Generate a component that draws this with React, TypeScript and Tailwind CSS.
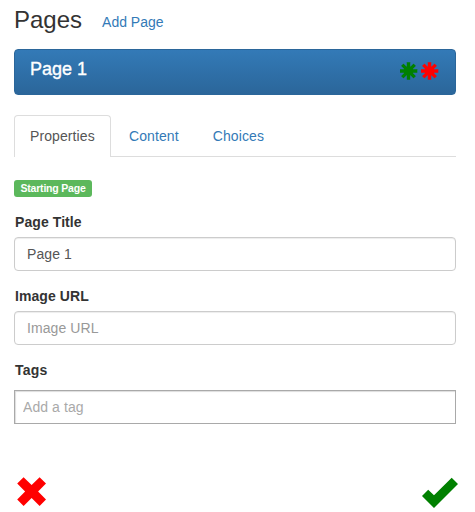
import React from 'react';

function Asterisk({ color }: { color: string }) {
  return (
    <svg width="18" height="18" viewBox="-8.5 -9 18 18" fill={color}>
      {[0, 45, 90, 135].map((angle) => (
        <rect key={angle} x="-1.7" y="-8.8" width="3.4" height="17.6" rx="0.2" transform={`rotate(${angle})`} />
      ))}
      <circle r="4.7" />
    </svg>
  );
}

function Field({ id, label, value, placeholder }: { id: string; label: string; value?: string; placeholder?: string }) {
  return (
    <div className="mb-[15px]">
      <label htmlFor={id} className="mb-[5px] block pl-px font-bold tracking-[0.08px]">{label}</label>
      <input
        id={id}
        defaultValue={value}
        placeholder={placeholder}
        className="block h-[34px] w-full rounded border border-[#ccc] bg-white px-3 py-1.5 tracking-[0.08px] text-[#555] shadow-[inset_0_1px_1px_rgba(0,0,0,0.075)] outline-none placeholder:text-[#999]"
      />
    </div>
  );
}

export default function App() {
  return (
    <main className="h-[512px] w-[475px] overflow-hidden bg-white pl-[14px] pr-[19px] pt-[6px] font-['Liberation_Sans',Arial,sans-serif] text-[14px] leading-5 text-[#333]">
      <header className="flex h-[43px] items-start">
        <h1 className="text-[24px] leading-[28px]">Pages</h1>
        <a className="ml-5 pt-[6px] text-[#337ab7]">Add Page</a>
      </header>

      <section className="flex h-[46px] justify-between rounded border border-[#2b669a] bg-linear-to-b from-[#337ab7] to-[#2b669a] pl-[15px] pr-4 text-white">
        <h2 className="pt-[9px] text-[18px] leading-5 [-webkit-text-stroke:0.35px_white]">Page 1</h2>
        <div className="flex gap-[3px] pt-[12px]">
          <Asterisk color="#008000" />
          <Asterisk color="#ff0000" />
        </div>
      </section>

      <nav className="mt-5 flex h-[42px] border-b border-[#ddd] tracking-[0.1px]">
        <a className="mr-[2px] h-[42px] w-[97px] rounded-t border border-b-0 border-[#ddd] bg-white pl-[15px] pt-[10px] text-[#555]">Properties</a>
        <a className="mr-[2px] pl-4 pr-4 pt-[11px] text-[#337ab7]">Content</a>
        <a className="pl-4 pt-[11px] text-[#337ab7]">Choices</a>
      </nav>

      <div className="mt-[23px] h-[17px] w-[78px] rounded-[3px] bg-[#5cb85c] text-center text-[10.5px] font-bold leading-[17px] tracking-[-0.2px] text-white">Starting Page</div>

      <form className="mt-[15px]">
        <Field id="title" label="Page Title" value="Page 1" />
        <Field id="image" label="Image URL" placeholder="Image URL" />
        <label htmlFor="tags" className="mb-[10px] block pl-px font-bold tracking-[0.2px]">Tags</label>
        <input
          id="tags"
          placeholder="Add a tag"
          className="block h-[34px] w-full border border-[#a9a9a9] bg-white px-2 tracking-[0.08px] shadow-[inset_1px_1px_1px_#ddd] outline-none placeholder:text-[#a9a9a9]"
        />
      </form>

      <footer className="-mr-[3px] mt-[53px] flex justify-between">
        <svg className="ml-[3px]" width="30" height="30" viewBox="17 477 30 30" fill="#ff0000">
          <path d="M23.6 477.2 17.2 483.6 25.1 491.6 17.2 499.6 23.6 506 31.6 498 39.6 506 46 499.6 38.1 491.6 46 483.6 39.6 477.2 31.6 485.1Z" />
        </svg>
        <svg width="38" height="32" viewBox="421 477 38 32" fill="#008000">
          <path d="M451.7 477.7 458 484 434 508 422 496 428.2 489.7 434 495.3Z" />
        </svg>
      </footer>
    </main>
  );
}
